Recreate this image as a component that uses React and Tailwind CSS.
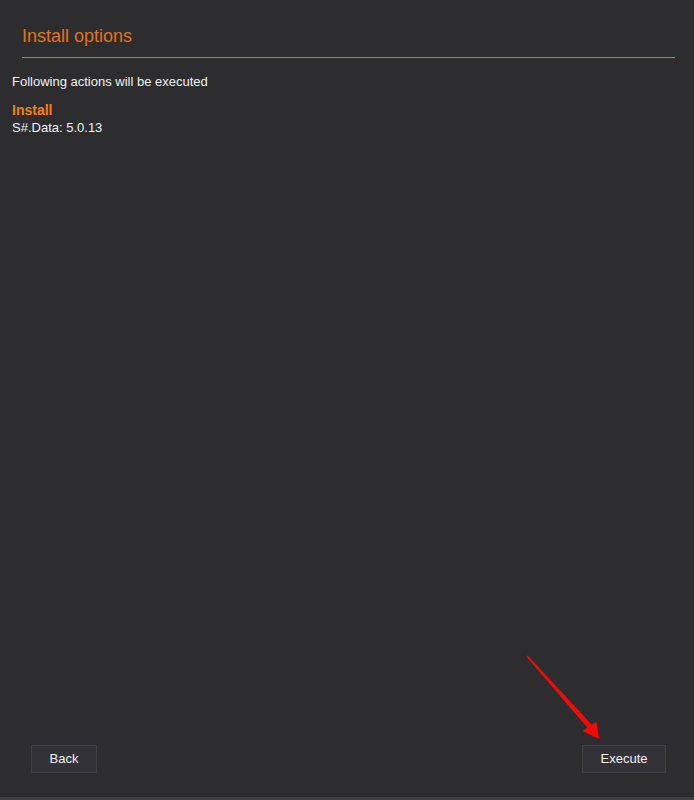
import React from 'react';

const FONT = { fontFamily: '"Liberation Sans", Arial, sans-serif' };

const Button = ({ children, className = '' }) => (
    <button className={`h-[28px] bg-[#333337] border border-[#3f3f46] text-[13px] text-[#f1f1f1] ${className}`}>
        {children}
    </button>
);

const App = () => {
    return (
        <div style={FONT} className="relative w-[694px] h-[800px] bg-[#2d2d30] flex flex-col border-b-[3px] border-[#3f3f44]">
            {/* Header */}
            <div className="pt-[24px] pl-[22px] pr-[19px]">
                <h1 className="text-[18px] leading-[24px] text-[#e0741c]">Install options</h1>
                <div className="mt-[9px] border-t border-[#c97a2e]" />
            </div>

            {/* Summary */}
            <div className="px-[12px] pt-[15px] flex flex-col">
                <p className="text-[13px] leading-[18px] text-[#f1f1f1]">Following actions will be executed</p>
                <p className="mt-[10px] text-[14px] leading-[18px] font-bold text-[#f5820c]">Install</p>
                <p className="text-[13px] leading-[18px] text-[#f1f1f1]">S#.Data: 5.0.13</p>
            </div>

            <div className="flex-1" />

            {/* Footer */}
            <div className="flex items-center justify-between pl-[31px] pr-[28px] pb-[24px]">
                <Button className="w-[66px]">Back</Button>
                <Button className="w-[84px]">Execute</Button>
            </div>

            {/* Annotation arrow */}
            <svg className="absolute left-0 top-0 pointer-events-none" width="694" height="800" viewBox="0 0 694 800">
                <polygon points="526.3,656.6 527.7,655.4 592.5,725.5 588.5,729" fill="#f00a0a" />
                <polygon points="599,739 582.5,731 596.5,721.5" fill="#f00a0a" />
            </svg>
        </div>
    );
};

export default App;
